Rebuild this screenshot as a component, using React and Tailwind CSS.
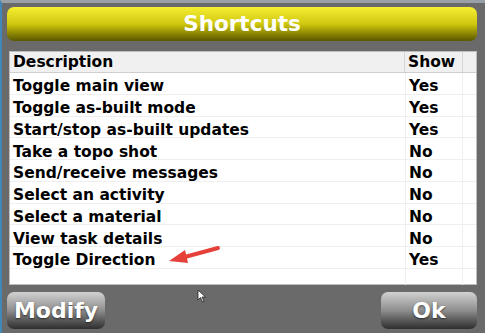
import React from "react";

const rows = [
  ["Toggle main view", "Yes"],
  ["Toggle as-built mode", "Yes"],
  ["Start/stop as-built updates", "Yes"],
  ["Take a topo shot", "No"],
  ["Send/receive messages", "No"],
  ["Select an activity", "No"],
  ["Select a material", "No"],
  ["View task details", "No"],
  ["Toggle Direction", "Yes"],
];

function Boton({ children, className }) {
  return (
    <button
      type="button"
      className={
        "h-[37px] rounded-[7px] bg-gradient-to-b from-[#d2d2d2] via-[#8e8e8e] to-[#2f2f2f] text-white font-bold text-[22px] leading-none [text-shadow:0_1px_2px_rgba(0,0,0,0.6)] " +
        className
      }
    >
      {children}
    </button>
  );
}

export default function App() {
  return (
    <div
      className="relative w-[485px] h-[333px] overflow-hidden bg-[#6a6a6a] border-t-[3px] border-t-[#9aa1a6] border-l-2 border-l-[#3f88b8] pl-[5px] pr-[8px] pt-[4px]"
      style={{ fontFamily: '"DejaVu Sans", Verdana, sans-serif' }}
    >
      <div className="h-[34px] rounded-[7px] bg-gradient-to-b from-[#f6ee30] via-[#cfc80e] to-[#5c5800] flex items-center justify-center">
        <span className="text-white font-bold text-[21.5px] leading-none">Shortcuts</span>
      </div>

      <div className="mt-[10px] ml-[2px] w-[468px] h-[234px] bg-white border border-[#bdbdbd] text-black font-bold text-[15.5px]">
        <div className="flex h-[21px] bg-[#f0f0f0] border-b border-[#cfcfcf]">
          <div className="w-[395px] pl-[3px] pt-[1px] flex items-center border-r border-[#d6d6d6]">Description</div>
          <div className="w-[58px] pl-[3px] pt-[1px] flex items-center border-r border-[#d6d6d6]">Show</div>
          <div className="flex-1" />
        </div>
        {rows.map(([d, s]) => (
          <div key={d} className="flex h-[21.75px] border-b border-[#efefef]">
            <div className="w-[395px] pl-[3px] pt-[7px] flex items-center">{d}</div>
            <div className="w-[58px] pl-[3px] pt-[7px] flex items-center border-x border-[#f0f0f0]">{s}</div>
            <div className="flex-1" />
          </div>
        ))}
        <div className="flex h-[16px]">
          <div className="w-[395px]" />
          <div className="w-[58px] border-x border-[#f0f0f0]" />
        </div>
      </div>

      <div className="mt-[7px] flex justify-between">
        <Boton className="w-[98px]">Modify</Boton>
        <Boton className="w-[96px]">Ok</Boton>
      </div>

      <svg className="absolute left-[165px] top-[240px]" width="56" height="24" viewBox="0 0 56 24">
        <path d="M51 5 L14 15" stroke="#e5403a" strokeWidth="4" strokeLinecap="round" />
        <path d="M2 18 L18 7 L21 20 Z" fill="#e5403a" />
      </svg>

      <svg className="absolute left-[195px] top-[286px]" width="10" height="14" viewBox="0 0 10 14">
        <path d="M1 1 L1 11 L3.5 8.5 L5.5 13 L7 12.3 L5 8 L8.5 8 Z" fill="#ffffff" stroke="#222" strokeWidth="0.8" />
      </svg>
    </div>
  );
}
